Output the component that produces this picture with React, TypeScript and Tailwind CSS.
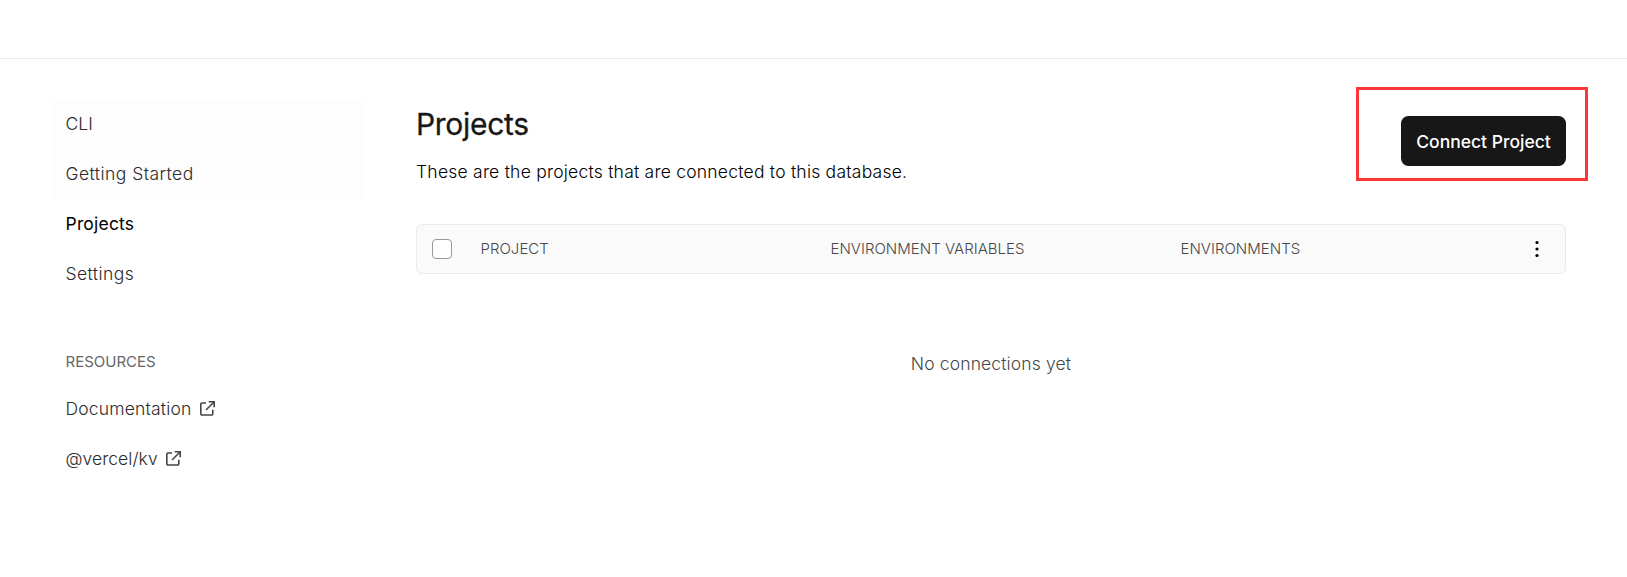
import React from "react";

function ExternalIcon() {
  return (
    <svg className="mb-px" width="17" height="17" viewBox="0 0 17 17" fill="none" stroke="#444" strokeWidth="1.6">
      <path d="M7 3H3a1.2 1.2 0 0 0-1.2 1.2v9.6A1.2 1.2 0 0 0 3 15h9.6a1.2 1.2 0 0 0 1.2-1.2V9.8" />
      <path d="M9.7 1.8h5.5v5.5" />
      <path d="M7 10L15 2" />
    </svg>
  );
}

function Sidebar() {
  return (
    <aside className="w-[315px] shrink-0 pt-[40px] text-[17.5px] leading-[50px] font-light text-[#2c2c2c]">
      <nav className="flex flex-col tracking-[0.45px]">
        <a className="h-[50px] rounded-[7.5px] bg-[#fdfdfd] px-[14.5px] tracking-[0.1px]">CLI</a>
        <a className="h-[50px] rounded-[7.5px] bg-[#fdfdfd] px-[14.5px]">Getting Started</a>
        <a className="h-[50px] px-[14.5px] font-normal tracking-[0.2px] text-black">Projects</a>
        <a className="h-[50px] px-[14.5px]">Settings</a>
      </nav>
      <h2 className="mt-[53px] px-[14.5px] text-[15px] leading-5 font-normal text-[#666]">RESOURCES</h2>
      <div className="mt-[12px] flex flex-col tracking-[0.18px]">
        <a className="flex h-[50px] items-center gap-[7.5px] px-[14.5px]">Documentation <ExternalIcon /></a>
        <a className="flex h-[50px] items-center gap-[7.5px] px-[14.5px] tracking-[0.06px]">@vercel/kv <ExternalIcon /></a>
      </div>
    </aside>
  );
}

export default function App() {
  return (
    <div className="flex h-[577px] w-[1627px] flex-col overflow-hidden bg-white font-['Inter',sans-serif]">
      <header className="h-[59px] shrink-0 border-b border-[#eaeaea]" />
      <div className="flex pl-[51px]">
        <Sidebar />
        <main className="ml-[50px] w-[1150px] text-[#171717]">
          <div className="flex h-[165px] justify-between">
            <div className="pt-[45px]">
              <h1 className="text-[30px] leading-[40px] font-normal tracking-[-0.3px] [-webkit-text-stroke:0.3px_#171717]">Projects</h1>
              <p className="mt-[15px] text-[17.5px] leading-[26px] font-light tracking-[0.23px] text-black">These are the projects that are connected to this database.</p>
            </div>
            <div className="relative mt-[57px] h-[50px]">
              <button className="h-[50px] w-[165px] rounded-[7.5px] bg-[#171717] pt-[2px] text-[17.5px] font-medium text-white">Connect Project</button>
              <div className="absolute -left-[45px] -top-[29px] h-[94px] w-[232px] border-[3px] border-[#fc3737]" />
            </div>
          </div>
          <div className="flex h-[50px] items-center rounded-[6px] border border-[#eaeaea] bg-[#fafafa] pl-[15px] text-[15px] font-light tracking-[0.02px] text-[#484848]">
            <span className="size-[20px] rounded-[4px] border border-[#999] bg-white" />
            <span className="ml-[28.5px] w-[350px]">PROJECT</span>
            <span className="w-[350px]">ENVIRONMENT VARIABLES</span>
            <span className="w-[346.5px]">ENVIRONMENTS</span>
            <svg width="20" height="20" viewBox="0 0 20 20" fill="#000">
              <circle cx="10" cy="3.5" r="1.6" />
              <circle cx="10" cy="10" r="1.6" />
              <circle cx="10" cy="16.5" r="1.6" />
            </svg>
          </div>
          <p className="mt-[77px] text-center text-[17.5px] leading-[26px] font-light tracking-[0.13px] text-[#484848]">No connections yet</p>
        </main>
      </div>
    </div>
  );
}
